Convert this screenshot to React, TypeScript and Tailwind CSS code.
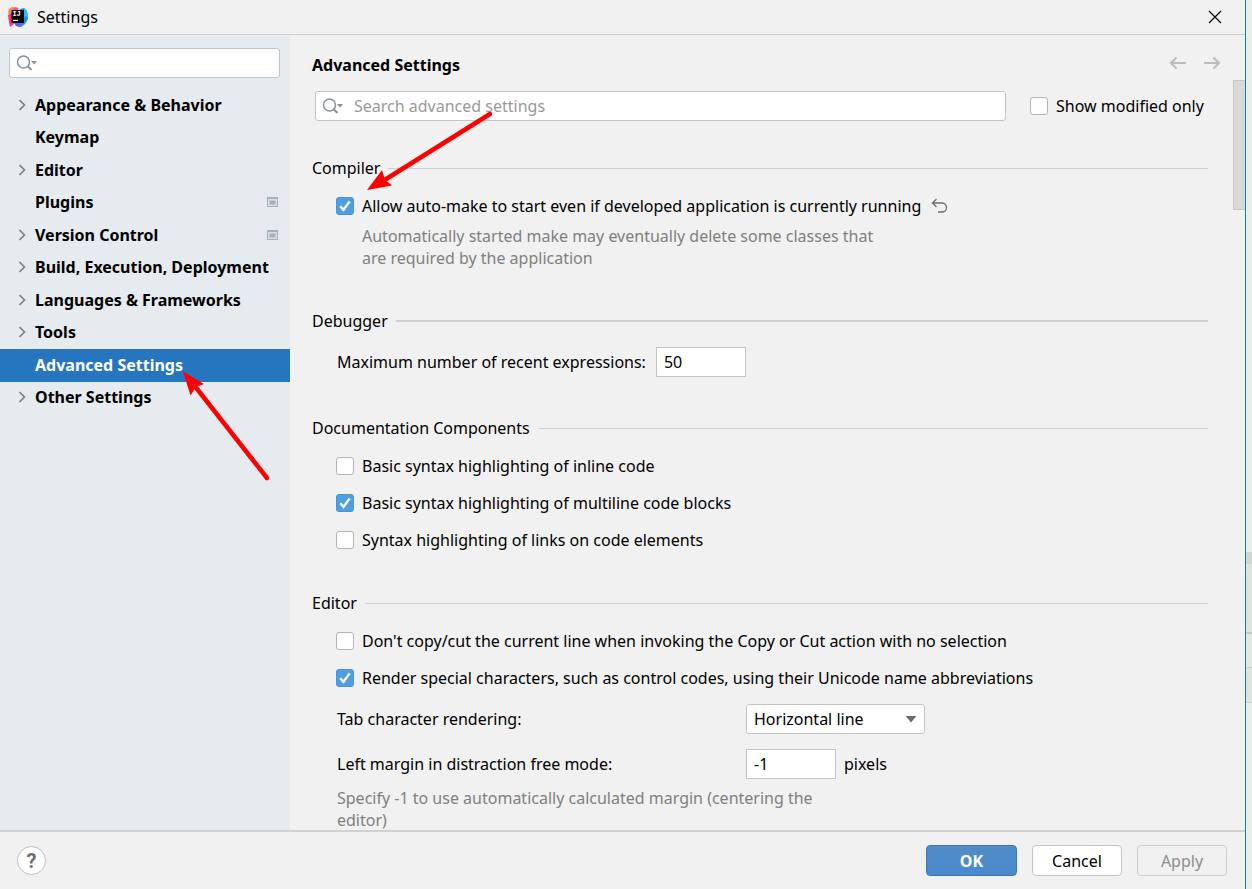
import React, { useState } from "react";

type TreeItem = { name: string; expandable?: boolean; project?: boolean };

const TREE: TreeItem[] = [
  { name: "Appearance & Behavior", expandable: true },
  { name: "Keymap" },
  { name: "Editor", expandable: true },
  { name: "Plugins", project: true },
  { name: "Version Control", expandable: true, project: true },
  { name: "Build, Execution, Deployment", expandable: true },
  { name: "Languages & Frameworks", expandable: true },
  { name: "Tools", expandable: true },
  { name: "Advanced Settings" },
  { name: "Other Settings", expandable: true },
];

function AppLogo() {
  return (
    <svg width="20" height="20" viewBox="0 0 20 20" aria-hidden="true">
      <path d="M1 2L4 0l5 1 3 4-5 9-6-1 1-4-2-3z" fill="#fd8a3c" />
      <path d="M0 8l4-2 6 6-4 5-4 3-1-5z" fill="#fe2f80" />
      <path d="M7 0l4 1-3 4-3-3z" fill="#f0569e" />
      <path d="M12 2l4-1 3 3 1 8-3 5-4 3-5-1-1-4z" fill="#1c8df5" />
      <path d="M16 1l3 3 1 5-4 1z" fill="#35b9f8" />
      <path d="M6 16l5-1 2 5-5-1z" fill="#6b57e8" />
      <rect x="3.500" y="3" width="12.500" height="13" fill="#0b0508" />
      <text x="4.400" y="9.300" fontSize="7" fontWeight="700" fill="#fff" fontFamily="Liberation Mono, monospace">IJ</text>
      <rect x="5" y="12.800" width="5" height="1.200" fill="#fff" />
    </svg>
  );
}

function SearchIcon() {
  return (
    <svg width="22" height="18" viewBox="0 0 22 18" fill="none" aria-hidden="true" className="shrink-0">
      <circle cx="7.500" cy="8" r="6" stroke="#87939a" strokeWidth="1.500" />
      <path d="M11.500 12l4 4" stroke="#87939a" strokeWidth="2" />
      <path d="M15 7h6l-3 3.500z" fill="#87939a" />
    </svg>
  );
}

function Chevron() {
  return (
    <svg width="8" height="12" viewBox="0 0 8 12" fill="none" stroke="#7d8184" strokeWidth="1.700" aria-hidden="true">
      <path d="M0.500 1l5 5-5 5" />
    </svg>
  );
}

function ProjectIcon() {
  return (
    <svg width="11" height="10" viewBox="0 0 11 10" aria-hidden="true">
      <rect width="11" height="10" fill="#a5b1b8" />
      <rect x="1" y="2" width="9" height="7" fill="#dbe2e6" />
      <rect x="2.500" y="3.500" width="6" height="4" fill="#a5b1b8" />
    </svg>
  );
}

function HistoryArrow({ forward }: { forward?: boolean }) {
  return (
    <svg width="18" height="14" viewBox="0 0 18 14" fill="none" stroke="#bdbdbd" strokeWidth="2.200" aria-hidden="true">
      {forward ? <path d="M1 7h15M10.500 1.500L16 7l-5.500 5.500" /> : <path d="M17 7H2M7.500 1.500L2 7l5.500 5.500" />}
    </svg>
  );
}

function Check({ label, on }: { label: string; on?: boolean }) {
  const [checked, setChecked] = useState(!!on);
  return (
    <label className="flex h-6 items-center gap-2 whitespace-nowrap">
      <span className="relative flex size-[18px] shrink-0">
        <input
          type="checkbox"
          checked={checked}
          onChange={(e) => setChecked(e.target.checked)}
          className="peer size-[18px] appearance-none rounded-[3px] border border-[#b3b3b3] bg-white checked:border-[#4a93d9] checked:bg-[#4f9ee3]"
        />
        <svg
          viewBox="0 0 18 18"
          fill="none"
          stroke="#fff"
          strokeWidth="2.400"
          aria-hidden="true"
          className="pointer-events-none absolute inset-0 hidden peer-checked:block"
        >
          <path d="M4.200 9.300l3.300 3.500L13.700 4.400" />
        </svg>
      </span>
      <span>{label}</span>
    </label>
  );
}

function Heading({ title, thick }: { title: string; thick?: boolean }) {
  return (
    <div className="flex h-6 items-center gap-2">
      <h2>{title}</h2>
      <div className={thick ? "h-0.5 flex-1 bg-[#d1d1d1]" : "h-px flex-1 bg-[#d1d1d1]"} />
    </div>
  );
}

function Annotations() {
  return (
    <>
      <svg width="130" height="84" viewBox="0 0 130 84" aria-hidden="true" className="pointer-events-none absolute left-[365px] top-[110px]">
        <path d="M125 4L18 71" stroke="#f00" strokeWidth="4.500" strokeLinecap="round" />
        <path d="M2 80L17 60l3 9.500 7 6z" fill="#f00" />
      </svg>
      <svg width="92" height="116" viewBox="0 0 92 116" aria-hidden="true" className="pointer-events-none absolute left-[181px] top-[368px]">
        <path d="M86 110L13 17" stroke="#f00" strokeWidth="4.500" strokeLinecap="round" />
        <path d="M2 3.500L23 16l-8 3-5.500 8.500z" fill="#f00" />
      </svg>
    </>
  );
}

export default function App() {
  const [selected, setSelected] = useState("Advanced Settings");
  return (
    <div className="relative flex h-screen overflow-hidden bg-[#e6efe9] font-['Noto_Sans','Open_Sans',sans-serif] text-[16px] leading-6 text-black">
      <div className="flex min-w-0 flex-1 flex-col border-r border-[#1f76bf] bg-[#f1f1f1]">
        <header className="flex h-[35px] shrink-0 items-center border-b border-[#cfcfcf] pl-2 pr-[23px]">
          <AppLogo />
          <h1 className="ml-[9px] flex-1">Settings</h1>
          <button aria-label="Close">
            <svg width="14" height="14" viewBox="0 0 14 14" stroke="#111" strokeWidth="1.300" aria-hidden="true">
              <path d="M1 1l12 12M13 1L1 13" />
            </svg>
          </button>
        </header>

        <div className="flex min-h-0 flex-1">
          <aside className="w-[290px] shrink-0 bg-[#e6ebef] pt-[13px]">
            <div className="ml-[9px] mr-[10px] flex h-[30px] items-center rounded-[3px] border border-[#c2c5c7] bg-white pl-1.5">
              <SearchIcon />
              <input aria-label="Search settings" className="min-w-0 flex-1 bg-transparent px-1 outline-none" />
            </div>
            <ul className="mt-[11px] grid h-[325px] auto-rows-fr font-bold">
              {TREE.map((item) => (
                <li key={item.name} className="flex">
                  <button
                    onClick={() => setSelected(item.name)}
                    className={
                      item.name === selected
                        ? "flex flex-1 items-center bg-[#2675bf] pb-px pl-[19px] pr-3 text-left text-white"
                        : "flex flex-1 items-center pb-px pl-[19px] pr-3 text-left"
                    }
                  >
                    <span className="w-4 shrink-0">{item.expandable && <Chevron />}</span>
                    <span className="flex-1 whitespace-nowrap">{item.name}</span>
                    {item.project && <ProjectIcon />}
                  </button>
                </li>
              ))}
            </ul>
          </aside>

          <main className="flex min-w-0 flex-1 flex-col">
            <div className="flex h-[45px] shrink-0 items-start justify-between pl-[22px] pr-6 pt-[18px]">
              <h2 className="font-bold">Advanced Settings</h2>
              <div className="flex gap-4 pt-[3px]">
                <button aria-label="Back"><HistoryArrow /></button>
                <button aria-label="Forward"><HistoryArrow forward /></button>
              </div>
            </div>

            <div className="flex min-h-0 flex-1">
              <div className="min-w-0 flex-1 overflow-hidden pl-[22px] pr-[25px] pt-[11px]">
                <div className="flex items-center gap-6 pl-[3px]">
                  <div className="flex h-[30px] flex-1 items-center rounded-[3px] border border-[#c4c4c4] bg-white pl-1.5">
                    <SearchIcon />
                    <input
                      aria-label="Search advanced settings"
                      placeholder="Search advanced settings"
                      className="min-w-0 flex-1 bg-transparent pl-2.5 outline-none placeholder:text-[#999]"
                    />
                  </div>
                  <div className="w-[178px]">
                    <Check label="Show modified only" />
                  </div>
                </div>

                <section className="mt-[35px]">
                  <Heading title="Compiler" />
                  <div className="mt-3.5 pl-6">
                    <div className="flex items-center gap-2.5">
                      <Check label="Allow auto-make to start even if developed application is currently running" on />
                      <button aria-label="Reset to default">
                        <svg width="17" height="16" viewBox="0 0 17 16" fill="none" stroke="#6e6e6e" strokeWidth="1.300" aria-hidden="true">
                          <path d="M5.500 1L1.500 5l4 4M1.500 5H11a4.500 4.500 0 0 1 0 9H7" />
                        </svg>
                      </button>
                    </div>
                    <p className="mt-[7px] pl-[26px] leading-[22px] text-[#808080]">
                      Automatically started make may eventually delete some classes that
                      <br />
                      are required by the application
                    </p>
                  </div>
                </section>

                <section className="mt-10">
                  <Heading title="Debugger" thick />
                  <div className="mt-3.5 flex items-center gap-2.5 pl-[25px]">
                    <label htmlFor="recent">Maximum number of recent expressions:</label>
                    <input id="recent" defaultValue="50" className="h-[30px] w-[90px] border border-[#c4c4c4] bg-white px-[7px] outline-none" />
                  </div>
                </section>

                <section className="mt-[39px]">
                  <Heading title="Documentation Components" />
                  <div className="mt-3.5 flex flex-col gap-[13px] pl-6">
                    <Check label="Basic syntax highlighting of inline code" />
                    <Check label="Basic syntax highlighting of multiline code blocks" on />
                    <Check label="Syntax highlighting of links on code elements" />
                  </div>
                </section>

                <section className="mt-[39px]">
                  <Heading title="Editor" />
                  <div className="mt-3.5 flex flex-col gap-[13px] pl-6">
                    <Check label="Don't copy/cut the current line when invoking the Copy or Cut action with no selection" />
                    <Check label="Render special characters, such as control codes, using their Unicode name abbreviations" on />
                  </div>
                  <div className="mt-3.5 grid grid-cols-[409px_auto] items-center justify-start gap-y-[15px] pl-[25px]">
                    <label htmlFor="tabchar">Tab character rendering:</label>
                    <div className="relative flex w-[179px] items-center">
                      <select id="tabchar" className="h-[30px] w-full appearance-none rounded-[3px] border border-[#c4c4c4] bg-white pl-[7px] outline-none">
                        <option>Horizontal line</option>
                      </select>
                      <svg width="12" height="8" viewBox="0 0 12 8" aria-hidden="true" className="pointer-events-none absolute right-2">
                        <path d="M0.500 1h11L6 7.500z" fill="#6e6e6e" />
                      </svg>
                    </div>
                    <label htmlFor="margin">Left margin in distraction free mode:</label>
                    <div className="flex items-center gap-2">
                      <input id="margin" defaultValue="-1" className="h-[30px] w-[90px] border border-[#c4c4c4] bg-white px-[7px] outline-none" />
                      <span>pixels</span>
                    </div>
                  </div>
                  <p className="mt-2 pl-[25px] leading-[22px] text-[#808080]">
                    Specify -1 to use automatically calculated margin (centering the
                    <br />
                    editor)
                  </p>
                </section>
              </div>
              <div className="w-3 shrink-0">
                <div className="h-[130px] border border-r-0 border-[#c6c6c6] bg-[#d9d9d9]" />
              </div>
            </div>
          </main>
        </div>

        <footer className="flex h-[59px] shrink-0 items-center gap-[15px] border-t-2 border-[#d1d1d1] pl-[17px] pr-[18px]">
          <button aria-label="Help" className="flex size-[29px] items-center justify-center rounded-full border border-[#bfbfbf] bg-white font-['Roboto',sans-serif] text-[20px] font-bold leading-6 text-[#6e6e6e]">
            ?
          </button>
          <div className="flex-1" />
          <button className="h-[31px] w-[91px] rounded-[4px] border border-[#3d75b8] bg-linear-to-b from-[#528cc7] to-[#4989cc] font-bold text-white">OK</button>
          <button className="h-[31px] w-[90px] rounded-[4px] border border-[#c4c4c4] bg-white">Cancel</button>
          <button disabled className="h-[31px] w-[90px] rounded-[4px] border border-[#cfcfcf] text-[#8c8c8c]">Apply</button>
        </footer>
      </div>

      <div className="flex w-1.5 shrink-0 flex-col">
        <div className="h-[552px] bg-[#e6efe9]" />
        <div className="h-3 bg-[#d0d6d1]" />
        <div className="h-[70px] border-b-2 border-[#c5ccc7] bg-[#dce6df]" />
        <div className="h-[34px] border-b border-[#cbd1cc] bg-[#e0e9e3]" />
        <div className="h-[35px] border-b border-[#cbd1cc] bg-[#dce6df]" />
      </div>
      <Annotations />
    </div>
  );
}
